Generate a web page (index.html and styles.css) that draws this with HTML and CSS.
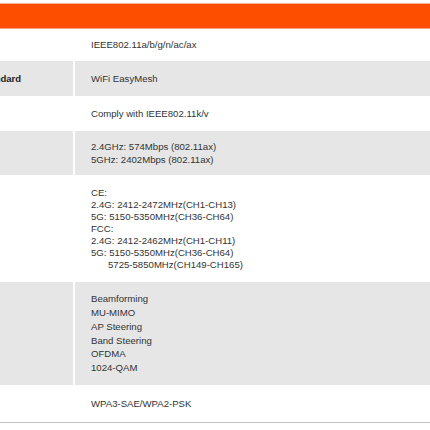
FILE: index.html
```html
<!DOCTYPE html>
<html lang="en">
<head>
<meta charset="utf-8">
<title>Specifications</title>
<link rel="stylesheet" href="styles.css">
</head>
<body>
<div class="sheet">
  <div class="head"></div>
  <div class="row r1">
    <div class="cell label">Standards</div>
    <div class="cell value">IEEE802.11a/b/g/n/ac/ax</div>
  </div>
  <div class="row r2 alt">
    <div class="cell label">Mesh Standard</div>
    <div class="cell value">WiFi EasyMesh</div>
  </div>
  <div class="row r3">
    <div class="cell label">Roaming</div>
    <div class="cell value">Comply with IEEE802.11k/v</div>
  </div>
  <div class="row r4 alt">
    <div class="cell label">Data Rate</div>
    <div class="cell value lh13">2.4GHz: 574Mbps (802.11ax)<br>5GHz: 2402Mbps (802.11ax)</div>
  </div>
  <div class="row r5">
    <div class="cell label">Bands</div>
    <div class="cell value">
      <div>CE:</div>
      <div>2.4G: 2412-2472MHz(CH1-CH13)</div>
      <div>5G: 5150-5350MHz(CH36-CH64)</div>
      <div>FCC:</div>
      <div>2.4G: 2412-2462MHz(CH1-CH11)</div>
      <div>5G: 5150-5350MHz(CH36-CH64)</div>
      <div class="indent">5725-5850MHz(CH149-CH165)</div>
    </div>
  </div>
  <div class="row r6 alt">
    <div class="cell label">Features</div>
    <div class="cell value lh14">
      <div>Beamforming</div>
      <div>MU-MIMO</div>
      <div>AP Steering</div>
      <div>Band Steering</div>
      <div>OFDMA</div>
      <div>1024-QAM</div>
    </div>
  </div>
  <div class="row r7 last">
    <div class="cell label">Security</div>
    <div class="cell value">WPA3-SAE/WPA2-PSK</div>
  </div>
</div>
</body>
</html>
```

FILE: styles.css
```css
html, body {
  margin: 0;
  padding: 0;
  background: #ffffff;
  overflow: hidden;
}

body {
  width: 430px;
  height: 430px;
  font-family: "Liberation Sans", Arial, sans-serif;
  color: #333333;
}

.sheet {
  padding-top: 3px;
  margin-left: -47px;
  width: 477px;
}

.head {
  height: 24px;
  background: #fd4e00;
  border-top: 1px solid #f8b290;
  border-bottom: 1px solid #f7a47c;
}

.row {
  display: grid;
  grid-template-columns: 120px 1fr;
  column-gap: 2px;
  background: #ffffff;
}

.row.alt .cell {
  background: #e6e6e6;
}

.cell {
  display: flex;
  flex-direction: column;
  justify-content: center;
}

.label {
  font-weight: bold;
  font-size: 9.5px;
  color: #222222;
  padding-left: 0;
  white-space: nowrap;
}

.value {
  font-size: 9.6px;
  line-height: 12px;
  padding-left: 16px;
  white-space: nowrap;
}

.lh13 { line-height: 13px; }
.lh14 { line-height: 13.8px; }

.indent { padding-left: 17px; }

.r1 { height: 32px; }
.r2 { height: 35px; }
.r3 { height: 35px; }
.r4 { height: 44px; }
.r5 { height: 107px; }
.r6 { height: 103px; }
.r7 { height: 37px; }

.last {
  border-bottom: 1px solid #c2c2c2;
}
```
